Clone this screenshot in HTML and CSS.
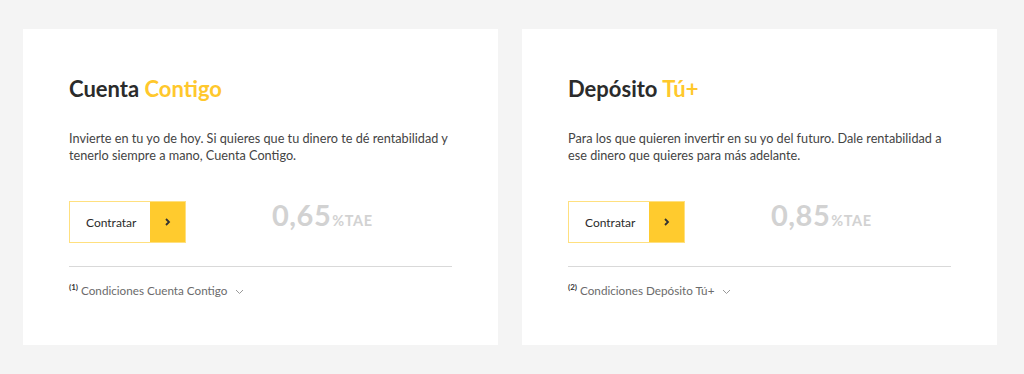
FILE: index.html
```html
<!DOCTYPE html>
<html lang="es">
<head>
    <meta charset="UTF-8">
    <title>Cuentas y depósitos</title>
    <link rel="stylesheet" href="styles.css">
</head>
<body>

<div class="products">
    <!-- Cuenta Contigo -->
    <div class="product-card">
        <h2 class="product-title">Cuenta <span class="accent">Contigo</span></h2>
        <p class="product-text">Invierte en tu yo de hoy. Si quieres que tu dinero te dé rentabilidad y tenerlo siempre a mano, Cuenta Contigo.</p>
        <div class="product-action">
            <a class="btn-contratar" href="#">
                <span class="btn-label">Contratar</span>
                <span class="btn-arrow">
                    <svg width="6" height="8" viewBox="0 0 6 8"><path d="M1 1l3 3-3 3" fill="none" stroke="#333" stroke-width="1.8"/></svg>
                </span>
            </a>
            <div class="rate"><span class="rate-value">0,65</span><span class="rate-unit">%TAE</span></div>
        </div>
        <div class="product-conditions">
            <sup>(1)</sup> Condiciones Cuenta Contigo
            <svg class="chevron" width="9" height="6" viewBox="0 0 9 6"><path d="M1 1l3.5 3.5L8 1" fill="none" stroke="#999" stroke-width="1"/></svg>
        </div>
    </div>

    <!-- Depósito Tú+ -->
    <div class="product-card">
        <h2 class="product-title">Depósito <span class="accent">Tú+</span></h2>
        <p class="product-text">Para los que quieren invertir en su yo del futuro. Dale rentabilidad a ese dinero que quieres para más adelante.</p>
        <div class="product-action">
            <a class="btn-contratar" href="#">
                <span class="btn-label">Contratar</span>
                <span class="btn-arrow">
                    <svg width="6" height="8" viewBox="0 0 6 8"><path d="M1 1l3 3-3 3" fill="none" stroke="#333" stroke-width="1.8"/></svg>
                </span>
            </a>
            <div class="rate"><span class="rate-value">0,85</span><span class="rate-unit">%TAE</span></div>
        </div>
        <div class="product-conditions">
            <sup>(2)</sup> Condiciones Depósito Tú+
            <svg class="chevron" width="9" height="6" viewBox="0 0 9 6"><path d="M1 1l3.5 3.5L8 1" fill="none" stroke="#999" stroke-width="1"/></svg>
        </div>
    </div>
</div>

</body>
</html>
```

FILE: styles.css
```css
body {
    margin: 0;
    background-color: #f4f4f4;
    font-family: 'Lato', 'Liberation Sans', sans-serif;
    color: #333;
}
.products {
    display: flex;
    gap: 24px;
    padding: 29px 27px 29px 23px;
}
.product-card {
    flex: 1;
    background-color: #fff;
    padding: 47px 46px 40px;
    min-height: 316px;
    box-sizing: border-box;
}
.product-title {
    margin: 0;
    font-size: 22px;
    line-height: 26px;
    font-weight: 700;
    color: #2b2b2b;
}
.accent {
    color: #ffc82c;
}
.product-text {
    margin: 28px 0 0;
    font-size: 12.7px;
    line-height: 17px;
    color: #444;
}
.product-action {
    display: flex;
    align-items: flex-start;
    margin-top: 37px;
}
/* botón contratar */
.btn-contratar {
    display: flex;
    width: 117px;
    height: 42px;
    box-sizing: border-box;
    border: 1px solid #ffe07f;
    text-decoration: none;
    color: #2b2b2b;
}
.btn-label {
    flex: 1;
    display: flex;
    align-items: center;
    padding-left: 16px;
    font-size: 12px;
}
.btn-arrow {
    width: 35px;
    display: flex;
    align-items: center;
    justify-content: center;
    background-color: #ffcb2e;
}
.rate {
    margin-left: 86px;
    line-height: 28px;
    color: #d2d2d2;
    font-weight: 700;
}
.rate-value {
    font-size: 29px;
    letter-spacing: 0.5px;
}
.rate-unit {
    font-size: 14.5px;
    margin-left: 1px;
    letter-spacing: 0.6px;
}
.product-conditions {
    margin-top: 23px;
    padding-top: 15px;
    border-top: 1px solid #d9d9d9;
    font-size: 11.7px;
    line-height: 16px;
    color: #6b6b6b;
}
.product-conditions sup {
    font-size: 8px;
    line-height: 0;
    font-weight: 700;
    color: #333;
}
.chevron {
    margin-left: 5px;
    vertical-align: middle;
}
```
